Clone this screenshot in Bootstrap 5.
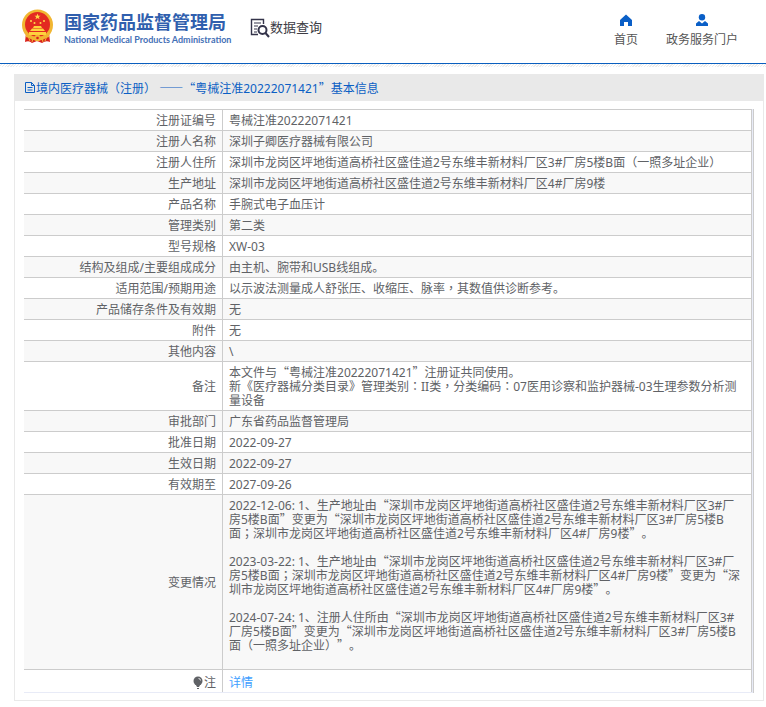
<!DOCTYPE html>
<html lang="zh-CN">
<head>
<meta charset="utf-8">
<meta name="viewport" content="width=device-width, initial-scale=1">
<title>国家药品监督管理局 数据查询</title>
<link href="https://cdn.jsdelivr.net/npm/bootstrap@5.3.0/dist/css/bootstrap.min.css" rel="stylesheet">
<style>
body{font-family:"Noto Sans","Noto Sans CJK SC",sans-serif;font-size:12px;line-height:14px;color:#606266;background:#fff;text-spacing-trim:space-all}
.site-head{height:63px}
.top-rule{height:4px;border-top:1px solid #0a5fbf;background:repeating-linear-gradient(135deg,#fff 0 1px,#ececec 1px 2px)}
.brand-box{padding:9px 0 0 21px}
.brand-cn{font-size:18px;line-height:24px;font-weight:700;color:#305fae;font-family:"Noto Sans CJK SC",sans-serif}
.brand-en{font-family:Lato,sans-serif;font-size:9px;line-height:14px;font-weight:700;color:#4470b6}
.names{width:160px;margin-left:10px;white-space:nowrap}
.query{padding:18px 0 0 26px;color:#3c3c44;font-size:13px;line-height:18px}
.top-links{padding:14px 28px 0 0;gap:28px}
.top-links a{color:#555;line-height:16px}
.top-links svg{margin-bottom:6px}
.panel{margin:7px 2px 0 14px;border:1px solid #e9e9e9;border-top:0}
.panel-title{margin-left:-1px;background:#e9e9e9;color:#0b5fc4;padding:7px 10px 5px;font-size:12px;line-height:15px;font-weight:400}
.table-wrap{margin:8px 9px 7px 9px;border-right:1px solid #ccc;padding-right:1px;background:#e8ebf7}
.info{width:100%;table-layout:fixed;border-collapse:separate;border-spacing:0;background:#fff;border-bottom:1px solid #e8ebf7}
.info .label-col{width:198px}
.info th,.info td{border-top:1px solid #ccc;padding:4px 6px 2px;font-weight:400;vertical-align:middle}
.info th{text-align:right}
.info td{border-left:1px solid #ccc;border-right:1px solid #ccc}
.info tr:nth-child(even) > *{background:#f8f8f8}
.info tr:last-child > *{padding-top:6px}
.wide{font-family:"Noto Sans CJK SC",sans-serif;line-height:0}
.mid{font-family:"Noto Sans CJK TC",sans-serif;line-height:0;font-feature-settings:"locl" 0}
.detail{color:#409eff}
</style>
<script src="https://cdn.jsdelivr.net/npm/bootstrap@5.3.0/dist/js/bootstrap.bundle.min.js"></script>
</head>
<body>
<header>
<div class="site-head d-flex justify-content-between">
<div class="d-flex align-items-start">
<div class="brand-box d-flex align-items-start">
<svg width="33" height="35" viewBox="0 0 33 35" aria-hidden="true">
<path d="M5 24L4 33q4-2 7 1l5-2 5 2q4-3 8-1l-1-9z" fill="#d9221c"/>
<path d="M7 27l2 5M26 27l-2 5M12 29l-1 4M21 29l1 4" stroke="#f4b936" stroke-width="1"/>
<circle cx="16.500" cy="16" r="15.500" fill="#f1b632"/>
<circle cx="16.500" cy="15.500" r="12.500" fill="#e32a21"/>
<path d="M16.500 4.500l.8 2.200h2.300l-1.800 1.400.7 2.200-2-1.300-2 1.300.7-2.200-1.800-1.400h2.300z" fill="#ffd84a"/>
<g fill="#ffd84a"><circle cx="10" cy="12" r="1"/><circle cx="13.500" cy="14" r="1"/><circle cx="19.500" cy="14" r="1"/><circle cx="23" cy="12" r="1"/></g>
<path d="M12 19l1-2h7l1 2zM9 22l2-2.500h11l2 2.500zM8 23h17v3H8z" fill="#ffd23d"/>
<path d="M5 27q11.500 4 23 0" fill="none" stroke="#f1b632" stroke-width="2"/>
<circle cx="16.500" cy="29" r="3.200" fill="#f1b632"/><circle cx="16.500" cy="29" r="1.300" fill="#d9221c"/>
</svg>
<div class="names"><div class="brand-cn">国家药品监督管理局</div><div class="brand-en">National Medical Products Administration</div></div>
</div>
<div class="query d-flex align-items-start">
<svg width="20" height="20" viewBox="0 0 20 20" fill="none" stroke="#34344a" aria-hidden="true"><path d="M13.500 6V1.500h-12v15H8" stroke-width="1.400"/><path d="M4 5h7M4 8h4M4 11h3M4 14h3" stroke-width="1.100"/><circle cx="12.500" cy="12" r="4" stroke-width="2"/><path d="M15.500 15l3.500 4" stroke-width="2"/></svg>
<span>数据查询</span>
</div>
</div>
<nav class="top-links d-flex align-items-start text-center">
<a href="#" class="text-decoration-none d-flex flex-column align-items-center"><svg width="12" height="12" viewBox="0 0 12 12" fill="#0a5fc7" aria-hidden="true"><path d="M6 0.500L12 6v6H8V8H4v4H0V6z"/></svg><span>首页</span></a>
<a href="#" class="text-decoration-none d-flex flex-column align-items-center"><svg width="12" height="12" viewBox="0 0 12 12" fill="#0a5fc7" aria-hidden="true"><circle cx="6" cy="3.200" r="3.200"/><path d="M0 12V9.500L3 7l3 2.500L9 7l3 2.500V12z"/></svg><span>政务服务门户</span></a>
</nav>
</div>
<div class="top-rule"></div>
</header>
<main class="panel">
<h1 class="panel-title mb-0 d-flex"><svg width="12" height="13" viewBox="0 0 12 13" fill="none" stroke="#0b5fc4" aria-hidden="true"><path d="M1.500 1.500h6l3 3v7h-9zM7.500 1.500v3h3M3.500 6.500h5M3.500 9h5"/></svg><span>境内医疗器械<span class="mid">（</span>注册<span class="mid">）</span> <span class="wide">——“</span>粤械注准20222071421<span class="wide">”</span>基本信息</span></h1>
<div class="table-wrap">
<table class="info">
<colgroup><col class="label-col"><col></colgroup>
<tbody>
<tr><th scope="row">注册证编号</th><td>粤械注准20222071421</td></tr>
<tr><th scope="row">注册人名称</th><td>深圳子卿医疗器械有限公司</td></tr>
<tr><th scope="row">注册人住所</th><td>深圳市龙岗区坪地街道高桥社区盛佳道2号东维丰新材料厂区3#厂房5楼B面<span class="mid">（</span>一照多址企业<span class="mid">）</span></td></tr>
<tr><th scope="row">生产地址</th><td>深圳市龙岗区坪地街道高桥社区盛佳道2号东维丰新材料厂区4#厂房9楼</td></tr>
<tr><th scope="row">产品名称</th><td>手腕式电子血压计</td></tr>
<tr><th scope="row">管理类别</th><td>第二类</td></tr>
<tr><th scope="row">型号规格</th><td>XW-03</td></tr>
<tr><th scope="row">结构及组成/主要组成成分</th><td>由主机、腕带和USB线组成。</td></tr>
<tr><th scope="row">适用范围/预期用途</th><td>以示波法测量成人舒张压、收缩压、脉率<span class="mid">，</span>其数值供诊断参考。</td></tr>
<tr><th scope="row">产品储存条件及有效期</th><td>无</td></tr>
<tr><th scope="row">附件</th><td>无</td></tr>
<tr><th scope="row">其他内容</th><td>\</td></tr>
<tr><th scope="row">备注</th><td>本文件与<span class="wide">“</span>粤械注准20222071421<span class="wide">”</span>注册证共同使用。<br>新《医疗器械分类目录》管理类别<span class="mid">：</span>II类<span class="mid">，</span>分类编码<span class="mid">：</span>07医用诊察和监护器械-03生理参数分析测<br>量设备</td></tr>
<tr><th scope="row">审批部门</th><td>广东省药品监督管理局</td></tr>
<tr><th scope="row">批准日期</th><td>2022-09-27</td></tr>
<tr><th scope="row">生效日期</th><td>2022-09-27</td></tr>
<tr><th scope="row">有效期至</th><td>2027-09-26</td></tr>
<tr><th scope="row">变更情况</th><td>2022-12-06: 1、生产地址由<span class="wide">“</span>深圳市龙岗区坪地街道高桥社区盛佳道2号东维丰新材料厂区3#厂<br>房5楼B面<span class="wide">”</span>变更为<span class="wide">“</span>深圳市龙岗区坪地街道高桥社区盛佳道2号东维丰新材料厂区3#厂房5楼B<br>面<span class="mid">；</span>深圳市龙岗区坪地街道高桥社区盛佳道2号东维丰新材料厂区4#厂房9楼<span class="wide">”</span>。<br><br>2023-03-22: 1、生产地址由<span class="wide">“</span>深圳市龙岗区坪地街道高桥社区盛佳道2号东维丰新材料厂区3#厂<br>房5楼B面<span class="mid">；</span>深圳市龙岗区坪地街道高桥社区盛佳道2号东维丰新材料厂区4#厂房9楼<span class="wide">”</span>变更为<span class="wide">“</span>深<br>圳市龙岗区坪地街道高桥社区盛佳道2号东维丰新材料厂区4#厂房9楼<span class="wide">”</span>。<br><br>2024-07-24: 1、注册人住所由<span class="wide">“</span>深圳市龙岗区坪地街道高桥社区盛佳道2号东维丰新材料厂区3#<br>厂房5楼B面<span class="wide">”</span>变更为<span class="wide">“</span>深圳市龙岗区坪地街道高桥社区盛佳道2号东维丰新材料厂区3#厂房5楼B<br>面<span class="mid">（</span>一照多址企业<span class="mid">）</span><span class="wide">”</span>。<br><br></td></tr>
<tr><th scope="row"><svg class="align-top" width="12" height="14" viewBox="0 0 12 14" aria-hidden="true"><circle cx="6" cy="5" r="4.500" fill="#606266"/><path d="M4 9h4l-1 2H5zM5 12h2v1H5z" fill="#606266"/><path d="M6.500 2.500q2 0 2 2" stroke="#fff" fill="none" stroke-width=".8"/></svg>注</th><td><a href="#" class="detail text-decoration-none">详情</a></td></tr>
</tbody>
</table>
</div>
</main>
</body>
</html>
